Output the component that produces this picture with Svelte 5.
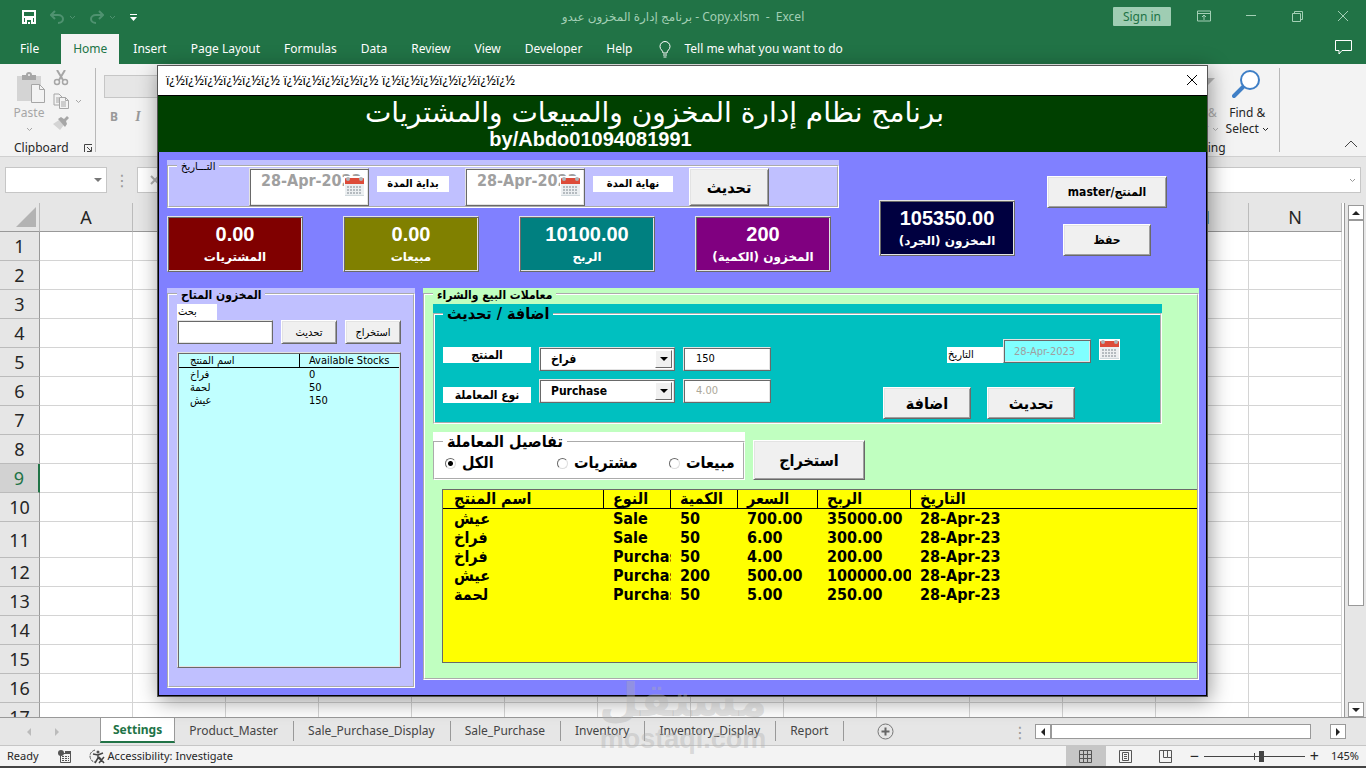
<script lang="ts">
  const menus = ['Insert', 'Page Layout', 'Formulas', 'Data', 'Review', 'View', 'Developer', 'Help'];
  const columns = 'ABCDEFGHIJKLMN'.split('');
  const rowNumbers = Array.from({ length: 17 }, (_, i) => i + 1);
  const sheets = [
    'Product_Master',
    'Sale_Purchase_Display',
    'Sale_Purchase',
    'Inventory',
    'Inventory_Display',
    'Report'
  ];

  const caption = [6, 5, 7].map((n) => 'ï¿½'.repeat(n)).join(' ');

  const totals = [
    { value: '0.00', label: 'المشتريات', tone: 'maroon' },
    { value: '0.00', label: 'مبيعات', tone: 'olive' },
    { value: '10100.00', label: 'الربح', tone: 'teal' },
    { value: '200', label: 'المخزون (الكمية)', tone: 'purple' }
  ];

  const stock = [
    { name: 'فراخ', qty: 0 },
    { name: 'لحمة', qty: 50 },
    { name: 'عيش', qty: 150 }
  ];

  const headings = ['اسم المنتج', 'النوع', 'الكمية', 'السعر', 'الربح', 'التاريخ'];
  const transactions = [
    ['عيش', 'Sale', '50', '700.00', '35000.00', '28-Apr-23'],
    ['فراخ', 'Sale', '50', '6.00', '300.00', '28-Apr-23'],
    ['فراخ', 'Purchase', '50', '4.00', '200.00', '28-Apr-23'],
    ['عيش', 'Purchase', '200', '500.00', '100000.00', '28-Apr-23'],
    ['لحمة', 'Purchase', '50', '5.00', '250.00', '28-Apr-23']
  ];

  const filters = [
    { id: 'all', label: 'الكل' },
    { id: 'purchases', label: 'مشتريات' },
    { id: 'sales', label: 'مبيعات' }
  ];

  let filter = $state('all');
  let product = $state('فراخ');
  let kind = $state('Purchase');
  let search = $state('');
</script>

{#snippet calendar()}
  <svg width="21" height="21" viewBox="0 0 21 21" aria-hidden="true">
    <rect width="21" height="21" fill="#fff" />
    <rect x="1" y="7" width="19" height="13" fill="#eceff1" />
    <rect x="1" y="19" width="19" height="1" fill="#cfd8dc" />
    <path d="M1 3a1 1 0 0 1 1-1h17a1 1 0 0 1 1 1v5H1z" fill="#dd4b39" />
    <circle cx="4" cy="3" r="2" fill="#b0b4b8" />
    <circle cx="17" cy="3" r="2" fill="#b0b4b8" />
    <path d="M3 11h15M3 14h15M3 17h15" stroke="#b5bbc0" stroke-width="2" stroke-dasharray="2 1" />
  </svg>
{/snippet}

{#snippet chevron()}
  <svg class="chevron" width="7" height="5" viewBox="0 0 7 5" aria-hidden="true">
    <path d="M1 1l2.500 2.500L6 1" fill="none" stroke="currentColor" />
  </svg>
{/snippet}

<div class="app">
  <header class="titlebar">
    <div class="quick">
      <button aria-label="Save">
        <svg width="14" height="14" viewBox="0 0 14 14">
          <path d="M1 1h12v12H1zM1 7h12" fill="none" stroke="#fff" stroke-width="2" />
          <path d="M3 8h8v6H3z" fill="#fff" />
          <path d="M5 10h4v4H8v-2H6v2H5z" fill="#217346" />
        </svg>
      </button>
      <button class="dim" aria-label="Undo">
        <svg width="14" height="14" viewBox="0 0 14 14">
          <path d="M5 1L1 5l4 4M1 5h7c3 0 5 2 5 4s-2 4-5 4" fill="none" stroke="currentColor" stroke-width="2" />
        </svg>
        {@render chevron()}
      </button>
      <button class="dim" aria-label="Redo">
        <svg width="14" height="14" viewBox="0 0 14 14">
          <path d="M9 1l4 4-4 4M13 5H6C3 5 1 7 1 9s2 4 5 4" fill="none" stroke="currentColor" stroke-width="2" />
        </svg>
        {@render chevron()}
      </button>
      <button aria-label="Customize">
        <svg width="7" height="7" viewBox="0 0 7 7">
          <path d="M0 0h7v1H0zM0 3h7L3.500 7z" fill="#fff" />
        </svg>
      </button>
    </div>
    <div class="doc">برنامج إدارة المخزون عبدو - Copy.xlsm&nbsp; -&nbsp; Excel</div>
    <div class="window-tools">
      <button class="signin">Sign in</button>
      <button aria-label="Ribbon options">
        <svg width="14" height="12" viewBox="0 0 14 12">
          <path d="M.5 1h13v10H.5zM.5 3.500h13M7 10V5M5 7l2-2 2 2" fill="none" stroke="currentColor" />
        </svg>
      </button>
      <button aria-label="Minimize">
        <svg width="12" height="12" viewBox="0 0 12 12"><path d="M1 5.500h10" stroke="currentColor" /></svg>
      </button>
      <button aria-label="Restore">
        <svg width="12" height="12" viewBox="0 0 12 12">
          <path d="M1.500 3.500h8v8h-8zM3.500 3V1.500h8v8H10" fill="none" stroke="currentColor" />
        </svg>
      </button>
      <button aria-label="Close">
        <svg width="12" height="12" viewBox="0 0 12 12"><path d="M1 1l10 10M11 1L1 11" stroke="currentColor" /></svg>
      </button>
    </div>
  </header>

  <nav class="menu">
    <button class="file">File</button>
    <button class="active">Home</button>
    {#each menus as item}
      <button>{item}</button>
    {/each}
    <button class="tell">
      <svg width="12" height="17" viewBox="0 0 12 17" aria-hidden="true">
        <path d="M4 12c0-3-3-3-3-6.500a5 5 0 0 1 10 0C11 9 8 9 8 12zM4 14h4M4.500 16h3" fill="none" stroke="#fff" />
      </svg>
      Tell me what you want to do
    </button>
    <button class="comment" aria-label="Comments">
      <svg width="17" height="15" viewBox="0 0 17 15">
        <path d="M.5.5h16v10H7l-3 3.500v-3.500H.5z" fill="none" stroke="#fff" />
      </svg>
    </button>
  </nav>

  <section class="ribbon">
    <div class="group clipboard">
      <div class="tools">
        <button class="paste">
          <svg width="30" height="31" viewBox="0 0 30 31" aria-hidden="true">
            <path d="M1 4h24v25H1z" fill="#d4d4d4" />
            <path d="M6 3h4a3 3 0 0 1 6 0h4v5H6z" fill="#a6a6a6" />
            <circle cx="13" cy="3" r="1" fill="#f3f3f3" />
            <path d="M15.500 12.500h8l5 5v13h-13z" fill="#f3f3f3" stroke="#a6a6a6" />
            <path d="M23.500 12.500v5h5" fill="none" stroke="#a6a6a6" />
          </svg>
          Paste
          {@render chevron()}
        </button>
        <div class="edit">
          <button aria-label="Cut">
            <svg width="16" height="16" viewBox="0 0 16 16">
              <path d="M4 0l6 10M12 0L6 10" stroke="#a6a6a6" stroke-width="2" />
              <circle cx="4" cy="12" r="2.500" fill="none" stroke="#a6a6a6" stroke-width="1.500" />
              <circle cx="12" cy="12" r="2.500" fill="none" stroke="#a6a6a6" stroke-width="1.500" />
            </svg>
          </button>
          <button aria-label="Copy">
            <svg width="16" height="16" viewBox="0 0 16 16">
              <path d="M1 1h5l3 3v8H1zM3 5h3M3 7h3M3 9h3" fill="none" stroke="#a6a6a6" />
              <path d="M6.500 4.500h6l3 3v8h-9zM12.500 4.500v3h3M8 9h5M8 11h5M8 13h5" fill="#f3f3f3" stroke="#a6a6a6" />
            </svg>
            {@render chevron()}
          </button>
          <button aria-label="Format painter">
            <svg width="16" height="14" viewBox="0 0 16 14">
              <path d="M0 8l6-4 5 5-4 5z" fill="#d4d4d4" />
              <path d="M5 3l3-2 3 2 3-3 2 2-3 3 1 3-2 3z" fill="#a6a6a6" />
            </svg>
          </button>
        </div>
      </div>
      <div class="group-name">
        <span>Clipboard</span>
        <svg width="8" height="8" viewBox="0 0 8 8" aria-hidden="true">
          <path d="M.5 8V.5H8M3 3l4 4M7.500 3v4.500H3" fill="none" stroke="#444" />
        </svg>
      </div>
    </div>
    <div class="group font">
      <input class="font-name" aria-label="Font" disabled />
      <div><button class="bold">B</button><button class="italic">I</button></div>
    </div>
    <div class="group editing">
      <div class="tools">
        <button class="sort">
          <svg width="32" height="30" viewBox="0 0 32 30" aria-hidden="true">
            <path d="M12 8h20l-8 8v8h-4v-8z" fill="#b9b9b9" />
          </svg>
          Sort &amp;<br />Filter {@render chevron()}
        </button>
        <button class="find">
          <svg width="30" height="30" viewBox="0 0 30 30" aria-hidden="true">
            <path d="M12 16L2 26" stroke="#3f7fc6" stroke-width="4" stroke-linecap="round" />
            <circle cx="18" cy="10" r="9" fill="#fff" stroke="#3f7fc6" stroke-width="2" />
          </svg>
          Find &amp;<br />Select {@render chevron()}
        </button>
      </div>
      <div class="group-name">Editing</div>
    </div>
    <button class="collapse" aria-label="Collapse ribbon">
      <svg width="14" height="8" viewBox="0 0 14 8"><path d="M1 7l6-6 6 6" fill="none" stroke="#444" /></svg>
    </button>
  </section>

  <section class="formula">
    <div class="name-box"><input aria-label="Name box" /><i class="down"></i></div>
    <span class="grip">⋮</span>
    <div class="formula-box">
      <svg width="10" height="12" viewBox="0 0 10 12" aria-hidden="true">
        <path d="M1 2l8 8M9 2l-8 8" stroke="#b0b0b0" stroke-width="2" />
      </svg>
      <input aria-label="Formula bar" />
      {@render chevron()}
    </div>
  </section>

  <main class="workbook">
    <div class="sheet">
      <table>
        <thead>
          <tr>
            <th class="corner"><i></i></th>
            {#each columns as column}
              <th>{column}</th>
            {/each}
          </tr>
        </thead>
        <tbody>
          {#each rowNumbers as n}
            <tr class:tall={n === 11} class:selected={n === 9}>
              <th>{n}</th>
              {#each columns as column (column)}
                <td></td>
              {/each}
            </tr>
          {/each}
        </tbody>
      </table>
    </div>
    <div class="vscroll">
      <button aria-label="Scroll up"><i class="up"></i></button>
      <div class="thumb"></div>
      <button class="last" aria-label="Scroll down"><i class="down"></i></button>
    </div>
  </main>

  <nav class="sheets">
    <div class="arrows"><i class="left"></i><i class="right"></i></div>
    <button class="current">Settings</button>
    {#each sheets as sheet}
      <button>{sheet}</button>
    {/each}
    <svg class="add" width="17" height="17" viewBox="0 0 17 17" aria-hidden="true">
      <circle cx="8.500" cy="8.500" r="7.500" fill="none" stroke="#777" />
      <path d="M8.500 4.500v8M4.500 8.500h8" stroke="#666" stroke-width="2" />
    </svg>
    <span class="grip">⋮</span>
    <div class="hscroll">
      <button aria-label="Scroll left"><i class="left"></i></button>
      <div class="thumb"></div>
      <button class="last" aria-label="Scroll right"><i class="right"></i></button>
    </div>
  </nav>

  <footer class="status">
    <span>Ready</span>
    <svg class="macro" width="14" height="13" viewBox="0 0 14 13" aria-hidden="true">
      <path d="M2.500 3.500h10v9h-10z" fill="none" stroke="#555" />
      <path d="M4 6.500h7M4 8.500h7M4 10.500h7" stroke="#555" stroke-dasharray="2 1" />
      <path d="M7 1h6v3H7z" fill="#555" />
      <circle cx="3" cy="3" r="3" fill="#555" />
    </svg>
    <svg class="access" width="16" height="15" viewBox="0 0 16 15" aria-hidden="true">
      <path d="M6 1C3 2 1 4 1 7s2 6 5 6" fill="none" stroke="#555" stroke-dasharray="3 1" />
      <circle cx="9" cy="3" r="1.500" fill="#555" />
      <path d="M4 5l5 1 5-2M9 6v3l-3 5M9 9l3 2M10 8l5 6M15 8l-5 6" fill="none" stroke="#444" stroke-width="1.500" />
    </svg>
    <span>Accessibility: Investigate</span>
    <div class="views">
      <button class="on" aria-label="Normal">
        <svg width="13" height="13" viewBox="0 0 13 13"><path d="M.5.5h12v12H.5zM4.500 0v13M8.500 0v13M0 4.500h13M0 8.500h13" fill="none" stroke="#555" /></svg>
      </button>
      <button aria-label="Page layout">
        <svg width="13" height="13" viewBox="0 0 13 13"><path d="M.5.5h12v12H.5zM3.500 2.500h6v8h-6zM5 4.500h3M5 6.500h3M5 8.500h3" fill="none" stroke="#555" /></svg>
      </button>
      <button aria-label="Page break preview">
        <svg width="13" height="13" viewBox="0 0 13 13"><path d="M.5.5h12v12H.5zM4.500 0v7.500h4V0M8.500 7.500h4" fill="none" stroke="#555" /></svg>
      </button>
    </div>
    <div class="zoom">
      <button aria-label="Zoom out">−</button>
      <svg width="101" height="11" viewBox="0 0 101 11" aria-hidden="true">
        <path d="M0 5.500h101M50.500 2v7" stroke="#444" />
        <path d="M55 0h5v11h-5z" fill="#444" />
      </svg>
      <button aria-label="Zoom in">+</button>
      <span>145%</span>
    </div>
  </footer>

  <div class="form" role="dialog" aria-label="برنامج نظام إدارة المخزون">
    <div class="form-bar">
      <span>{caption}</span>
      <button aria-label="Close form">
        <svg width="12" height="12" viewBox="0 0 12 12"><path d="M1 1l10 10M11 1L1 11" stroke="#000" /></svg>
      </button>
    </div>
    <div class="banner">
      <h1>برنامج نظام إدارة المخزون والمبيعات والمشتريات</h1>
      <p>by/Abdo01094081991</p>
    </div>

    <div class="body">
      <div class="top">
        <div class="summary">
          <div class="frame period">
            <fieldset>
              <legend>التـــاريخ</legend>
              <div class="period-row">
                <div class="date bevel">
                  <input id="start" value="28-Apr-2023" disabled />
                  <span class="cal">{@render calendar()}</span>
                </div>
                <label class="tag start" for="start">بداية المدة</label>
                <div class="date bevel">
                  <input id="end" value="28-Apr-2023" disabled />
                  <span class="cal">{@render calendar()}</span>
                </div>
                <label class="tag end" for="end">نهاية المدة</label>
                <button class="push medium">تحديث</button>
              </div>
            </fieldset>
          </div>
          <div class="tiles">
            {#each totals as total}
              <div class="tile bevel {total.tone}">
                <strong>{total.value}</strong>
                <span dir="rtl">{total.label}</span>
              </div>
            {/each}
          </div>
        </div>
        <div class="tile bevel navy">
          <strong>105350.00</strong>
          <span dir="rtl">المخزون (الجرد)</span>
        </div>
        <div class="actions">
          <button class="push master">master/المنتج</button>
          <button class="push save">حفظ</button>
        </div>
      </div>

      <div class="bottom">
        <div class="frame stock">
          <fieldset>
            <legend>المخزون المتاح</legend>
            <label class="search-label" for="search">بحث</label>
            <div class="search">
              <input id="search" class="bevel" bind:value={search} />
              <button class="push">تحديث</button>
              <button class="push">استخراج</button>
            </div>
            <div class="list bevel">
              <table>
                <thead>
                  <tr><th>اسم المنتج</th><th>Available Stocks</th></tr>
                </thead>
                <tbody>
                  {#each stock as item}
                    <tr><td>{item.name}</td><td>{item.qty}</td></tr>
                  {/each}
                </tbody>
              </table>
            </div>
          </fieldset>
        </div>

        <div class="frame deals">
          <fieldset>
            <legend>معاملات البيع والشراء</legend>
            <div class="frame entry">
              <fieldset>
                <legend>اضافة / تحديث</legend>
                <div class="entry-row">
                  <div class="fields">
                    <label class="tag" for="product">المنتج</label>
                    <div class="combo bevel">
                      <select id="product" bind:value={product}>
                        <option>فراخ</option>
                        <option>لحمة</option>
                        <option>عيش</option>
                      </select>
                      <span class="drop"><i class="down"></i></span>
                    </div>
                    <input class="bevel" aria-label="الكمية" value="150" />
                    <label class="tag low" for="kind">نوع المعاملة</label>
                    <div class="combo bevel">
                      <select id="kind" bind:value={kind}>
                        <option>Purchase</option>
                        <option>Sale</option>
                      </select>
                      <span class="drop"><i class="down"></i></span>
                    </div>
                    <input class="bevel muted" aria-label="السعر" value="4.00" disabled />
                  </div>
                  <div class="when">
                    <div class="when-date">
                      <label for="date">التاريخ</label>
                      <input id="date" class="bevel" value="28-Apr-2023" disabled />
                      {@render calendar()}
                    </div>
                    <div class="when-buttons">
                      <button class="push medium">اضافة</button>
                      <button class="push medium">تحديث</button>
                    </div>
                  </div>
                </div>
              </fieldset>
            </div>

            <div class="filter-row">
              <div class="frame details">
                <fieldset>
                  <legend>تفاصيل المعاملة</legend>
                  <div class="radios">
                    {#each filters as f}
                      <label><input type="radio" value={f.id} bind:group={filter} />{f.label}</label>
                    {/each}
                  </div>
                </fieldset>
              </div>
              <button class="push medium export">استخراج</button>
            </div>

            <div class="deals-list">
              <table>
                <thead>
                  <tr>
                    {#each headings as heading}
                      <th>{heading}</th>
                    {/each}
                  </tr>
                </thead>
                <tbody>
                  {#each transactions as row}
                    <tr>
                      {#each row as cell}
                        <td>{cell}</td>
                      {/each}
                    </tr>
                  {/each}
                </tbody>
              </table>
            </div>
          </fieldset>
        </div>
      </div>
    </div>
  </div>

  <div class="watermark" aria-hidden="true">
    <b>مستقل</b>
    <span>mostaql.com</span>
  </div>
</div>

<style>
  :global(body) {
    margin: 0;
    overflow: hidden;
  }

  .app {
    position: relative;
    height: 100vh;
    min-width: 1200px;
    display: flex;
    flex-direction: column;
    font: 12px/16px 'Noto Sans', 'DejaVu Sans', sans-serif;
    color: #262626;
    background: #e6e6e6;
  }

  .app * {
    box-sizing: border-box;
  }

  button,
  input,
  select {
    font: inherit;
    color: inherit;
    margin: 0;
    padding: 0;
    border: 0;
    background: none;
    border-radius: 0;
    white-space: nowrap;
  }

  svg {
    flex: none;
  }

  /* small triangles */
  i.up,
  i.down,
  i.left,
  i.right {
    width: 0;
    height: 0;
    border: 4px solid transparent;
  }

  i.up {
    border-top: 0;
    border-bottom-color: #222;
  }

  i.down {
    border-bottom: 0;
    border-top-color: #222;
  }

  i.left {
    border-left: 0;
    border-right-color: #222;
  }

  i.right {
    border-right: 0;
    border-left-color: #222;
  }

  /* excel chrome */
  .titlebar {
    height: 34px;
    flex: none;
    display: grid;
    grid-template-columns: 1fr auto 1fr;
    align-items: center;
    background: #217346;
    color: #a3cfb5;
  }

  .quick {
    display: flex;
    align-items: center;
    gap: 14px;
    padding-left: 22px;
  }

  .quick button {
    display: flex;
    align-items: center;
    gap: 5px;
  }

  .quick .dim {
    color: #4f9270;
  }

  .window-tools {
    display: flex;
    align-items: center;
    justify-content: flex-end;
    gap: 34px;
    padding-right: 17px;
    padding-bottom: 2px;
  }

  .window-tools button {
    display: flex;
  }

  .window-tools .signin {
    padding: 2px 10px 1px;
    margin-right: -8px;
    background: #9fcdb3;
    color: #217346;
    border-radius: 1px;
  }

  .menu {
    height: 30px;
    flex: none;
    display: flex;
    background: #217346;
    color: #fff;
  }

  .menu button {
    padding: 0 12px;
  }

  .menu .file {
    padding: 0 22px 0 20px;
  }

  .menu .active {
    padding: 0 12px;
    margin-right: 2px;
    background: #f3f3f3;
    color: #217346;
  }

  .menu .tell {
    display: flex;
    align-items: center;
    gap: 13px;
    padding-left: 15px;
  }

  .menu .comment {
    margin-left: auto;
    padding: 0 14px;
  }

  .ribbon {
    height: 93px;
    flex: none;
    display: flex;
    padding: 4px 0 0;
    background: #f3f3f3;
    border-bottom: 1px solid #d0d0d0;
  }

  .group {
    height: 84px;
    display: flex;
    flex-direction: column;
  }

  .tools {
    height: 72px;
    flex: none;
    display: flex;
    align-items: flex-start;
  }

  .clipboard {
    width: 96px;
    padding-left: 14px;
    border-right: 1px solid #b8b8b8;
  }

  .paste {
    width: 30px;
    display: flex;
    flex-direction: column;
    align-items: center;
    color: #a6a6a6;
  }

  .paste svg:first-child {
    margin: 4px 0 2px 3px;
  }

  .paste .chevron {
    margin-top: 6px;
  }

  .edit {
    display: flex;
    flex-direction: column;
    gap: 7px;
    padding: 2px 0 0 9px;
    color: #a6a6a6;
  }

  .edit button {
    display: flex;
    align-items: center;
    gap: 6px;
  }

  .group-name {
    display: flex;
    align-items: center;
    gap: 15px;
  }

  .font {
    padding: 7px 8px;
    justify-content: flex-start;
    gap: 11px;
    color: #999;
  }

  .font-name {
    width: 120px;
    height: 23px;
    border: 1px solid #c6c6c6;
    background: #e6e6e6;
  }

  .bold {
    width: 20px;
    font-weight: bold;
  }

  .italic {
    width: 28px;
    font-family: 'Liberation Serif', serif;
    font-style: italic;
    font-size: 14px;
    font-weight: bold;
  }

  .editing {
    margin-left: auto;
    padding-right: 10px;
    border-right: 1px solid #b8b8b8;
  }

  .editing .tools {
    gap: 7px;
  }

  .editing .tools button {
    padding-top: 2px;
  }

  .editing svg:first-child {
    display: block;
    margin: 0 auto 5px;
  }

  .editing .chevron {
    vertical-align: middle;
  }

  .editing .group-name {
    justify-content: center;
    padding-right: 37px;
  }

  .sort {
    color: #b0b0b0;
  }

  .collapse {
    width: 86px;
    padding: 0 8px 4px;
    text-align: right;
    align-self: flex-end;
  }

  .formula {
    height: 46px;
    flex: none;
    display: flex;
    align-items: center;
    padding: 0 5px 0 5px;
  }

  .name-box,
  .formula-box {
    height: 26px;
    display: flex;
    align-items: center;
    background: #fff;
    border: 1px solid #c6c6c6;
  }

  .name-box {
    width: 102px;
    padding-right: 5px;
  }

  .name-box input {
    width: 88px;
  }

  .name-box i {
    border-top-color: #777;
  }

  .grip {
    width: 30px;
    text-align: center;
    color: #999;
    font-size: 16px;
  }

  .formula-box {
    flex: 1;
    padding: 0 4px 0 12px;
    color: #999;
  }

  .formula-box input {
    flex: 1;
  }

  .workbook {
    flex: 1;
    min-height: 0;
    display: flex;
    border-bottom: 1px solid #999;
  }

  .sheet {
    flex: 1;
    overflow: hidden;
    background: #fff;
    border-right: 1px solid #999;
  }

  .sheet table {
    width: 1342px;
    table-layout: fixed;
    border-collapse: separate;
    border-spacing: 0;
    font-size: 18px;
    line-height: 20px;
  }

  .sheet th {
    padding: 0;
    font-weight: normal;
    background: #e6e6e6;
    border-right: 1px solid #bbb;
    border-bottom: 1px solid #bbb;
  }

  .sheet thead th {
    height: 29px;
    border-bottom-color: #999;
  }

  .sheet .corner {
    width: 40px;
    padding-left: 16px;
  }

  .corner i {
    display: block;
    border: 10px solid #b3b3b3;
    border-top-color: transparent;
    border-left-color: transparent;
    width: 0;
    height: 0;
  }

  .sheet td {
    height: 29px;
    padding: 0;
    border-right: 1px solid #d4d4d4;
    border-bottom: 1px solid #d4d4d4;
  }

  .sheet .tall td {
    height: 36px;
  }

  .sheet tbody th {
    border-right-color: #999;
  }

  .sheet .selected th {
    background: #d2d2d2;
    color: #217346;
    border-right: 2px solid #217346;
  }

  .vscroll {
    width: 21px;
    display: flex;
    flex-direction: column;
    padding: 2px 2px 0 3px;
  }

  .vscroll button,
  .hscroll button {
    width: 16px;
    height: 15px;
    display: flex;
    align-items: center;
    justify-content: center;
    background: #fff;
    border: 1px solid #999;
  }

  .vscroll .last {
    margin-top: auto;
  }

  .vscroll .thumb {
    height: 386px;
    background: #fff;
    border: 1px solid #999;
  }

  .sheets {
    height: 28px;
    flex: none;
    display: flex;
    border-bottom: 1px solid #c6c6c6;
    color: #444;
  }

  .sheets > button {
    height: 20px;
    margin-top: 3px;
    padding: 0 15px 0 14px;
    border-right: 1px solid #999;
  }

  .sheets > .current {
    height: 25px;
    margin-top: 0;
    padding: 0 12px;
    background: #fff;
    color: #217346;
    font-weight: bold;
    border-left: 1px solid #999;
    border-bottom: 2px solid #217346;
  }

  .arrows {
    width: 100px;
    display: flex;
    align-items: center;
    gap: 24px;
    padding-left: 27px;
  }

  .arrows .left {
    border-right-color: #bbb;
  }

  .arrows .right {
    border-left-color: #bbb;
  }

  .add {
    margin: 5px 0 0 33px;
  }

  .sheets .grip {
    margin-left: auto;
    padding-top: 6px;
  }

  .hscroll {
    width: 311px;
    display: flex;
    align-items: center;
    margin-right: 20px;
  }

  .hscroll .thumb {
    width: 260px;
    height: 15px;
    background: #fff;
    border: 1px solid #999;
  }

  .hscroll .last {
    margin-left: auto;
  }

  .status {
    height: 22px;
    flex: none;
    display: flex;
    align-items: center;
    padding-left: 7px;
    background: #f3f3f3;
    border-bottom: 2px solid #444;
    font-size: 11px;
  }

  .macro {
    margin: 0 17px 0 19px;
  }

  .access {
    margin-right: 3px;
  }

  .views {
    display: flex;
    align-self: stretch;
    margin-left: auto;
  }

  .views button {
    width: 40px;
    display: flex;
    align-items: center;
    justify-content: center;
  }

  .views .on {
    background: #c6c6c6;
  }

  .zoom {
    display: flex;
    align-items: center;
    gap: 5px;
    padding: 0 7px 0 4px;
  }

  .zoom button {
    font-size: 16px;
  }

  .zoom span {
    padding-left: 7px;
  }

  /* user form window */
  .form {
    position: absolute;
    top: 65px;
    left: 157px;
    right: 158px;
    border: 1px solid #555;
    background: #8080ff;
    box-shadow: 2px 4px 20px rgba(0, 0, 0, 0.4);
    font: 11px/13px 'DejaVu Sans Condensed', 'DejaVu Sans', sans-serif;
    color: #000;
  }

  .form-bar {
    height: 30px;
    display: flex;
    align-items: center;
    justify-content: space-between;
    padding: 0 9px 2px 8px;
    background: #fff;
    border-bottom: 1px solid #000;
    font: 13px/16px 'Noto Sans', sans-serif;
  }

  .form-bar button {
    display: flex;
  }

  .banner {
    height: 56px;
    background: #004000;
    color: #fff;
    text-align: center;
  }

  h1 {
    margin: 0;
    padding-right: 56px;
    font: 28px/34px 'DejaVu Sans', sans-serif;
  }

  .banner p {
    margin: 0;
    padding-right: 184px;
    font: bold 20px/18px 'Liberation Sans', sans-serif;
  }

  .body {
    padding: 8px 7px 7px 8px;
    border: solid #000;
    border-width: 0 1px 1px;
  }

  .bevel {
    border: 1px solid;
    border-color: #e3e3e3 #696969 #696969 #e3e3e3;
    box-shadow: inset 1px 1px #696969, inset -1px -1px #e3e3e3;
  }

  .push {
    background: #f0f0f0;
    border: 1px solid;
    border-color: #fff #696969 #696969 #fff;
    box-shadow: inset 1px 1px #e3e3e3, inset -1px -1px #a0a0a0;
  }

  .medium {
    font-size: 16px;
    font-weight: bold;
  }

  fieldset {
    min-width: 0;
    height: 100%;
    margin: 0;
    padding: 0;
    border: 2px groove #fff;
  }

  legend {
    height: 12px;
    margin-left: 8px;
    padding: 0 4px;
    line-height: 14px;
  }

  .top {
    display: flex;
  }

  .summary {
    width: 672px;
  }

  .period {
    height: 48px;
    background: #c0c0ff;
  }

  .period-row {
    display: flex;
    align-items: flex-start;
    padding-left: 80px;
    margin-top: -4px;
  }

  .date {
    position: relative;
    width: 120px;
    height: 38px;
    padding: 2px;
    background: #fff;
  }

  .date input {
    width: 100%;
    padding: 0 0 0 9px;
    font-size: 16px;
    line-height: 20px;
    font-weight: bold;
    color: #a0a0a0;
  }

  .cal {
    position: absolute;
    top: 7px;
    right: 3px;
  }

  .tag {
    height: 16px;
    background: #fff;
    text-align: center;
    font-weight: bold;
    line-height: 16px;
  }

  .period .tag {
    width: 72px;
    margin: 8px 16px 0 8px;
  }

  .period .end {
    width: 80px;
  }

  .period .push {
    width: 80px;
    height: 38px;
  }

  .tiles {
    display: flex;
    gap: 40px;
    padding-top: 8px;
  }

  .tile {
    width: 136px;
    height: 56px;
    flex: none;
    display: flex;
    flex-direction: column;
    align-items: center;
    gap: 5px;
    padding-top: 6px;
    color: #fff;
    font: bold 12px/14px 'DejaVu Sans', sans-serif;
  }

  .tile strong {
    font: bold 20px/22px 'Liberation Sans', sans-serif;
  }

  .maroon {
    background: #800000;
  }

  .olive {
    background: #808000;
  }

  .teal {
    background: #008080;
  }

  .purple {
    background: #800080;
  }

  .navy {
    background: #000040;
    margin: 40px 32px 0 40px;
  }

  .actions {
    display: flex;
    flex-direction: column;
    align-items: center;
    gap: 16px;
    padding-top: 16px;
  }

  .actions .push {
    height: 32px;
    font-size: 12px;
    font-weight: bold;
  }

  .master {
    width: 120px;
  }

  .save {
    width: 88px;
  }

  .bottom {
    display: flex;
    align-items: flex-start;
    gap: 8px;
    padding-top: 16px;
  }

  .stock {
    width: 248px;
    height: 400px;
    background: #c0c0ff;
  }

  .stock fieldset,
  .deals > fieldset {
    padding: 0 8px;
  }

  .stock legend,
  .deals legend {
    margin-left: 0;
    font-size: 12px;
    font-weight: bold;
  }

  .search-label {
    display: block;
    width: 40px;
    height: 16px;
    padding: 1px;
    margin-top: 4px;
    background: #fff;
  }

  .search {
    display: flex;
    gap: 8px;
    padding-bottom: 8px;
  }

  .search input {
    width: 96px;
    height: 24px;
    padding: 0 4px;
    background: #fff;
  }

  .search .push {
    width: 56px;
    height: 24px;
  }

  .list {
    width: 224px;
    height: 316px;
    padding: 1px;
    background: #c0ffff;
  }

  .list table {
    width: 100%;
    border-spacing: 0;
    table-layout: fixed;
  }

  .list th,
  .list td {
    height: 13px;
    padding: 0 9px;
    text-align: left;
    font-weight: normal;
  }

  .list th {
    border-bottom: 1px solid #000;
    white-space: nowrap;
  }

  .list th:first-child {
    width: 121px;
    border-right: 1px solid #000;
  }

  .list th:first-child,
  .list td:first-child {
    padding-left: 11px;
  }

  .deals {
    flex: 1;
    min-width: 0;
    height: 392px;
    background: #c0ffc0;
  }

  .entry {
    width: 729px;
    height: 120px;
    margin-top: 4px;
    background: #00c0c0;
  }

  .deals .frame legend {
    height: 20px;
    font-size: 16px;
    line-height: 20px;
  }

  .entry fieldset,
  .details fieldset {
    padding: 0 8px;
  }

  .entry-row {
    display: flex;
    justify-content: space-between;
    padding: 15px 32px 0 0;
  }

  .fields {
    display: grid;
    grid-template-columns: 88px 136px 88px;
    grid-auto-rows: 24px;
    gap: 8px;
    padding-top: 8px;
  }

  .fields .tag {
    font-size: 12px;
  }

  .low {
    align-self: end;
  }

  .fields input {
    padding: 0 12px 2px;
    background: #fff;
    min-width: 0;
  }

  .fields .muted {
    color: #aca899;
  }

  .combo {
    display: flex;
    padding: 2px;
    background: #fff;
  }

  .combo select {
    flex: 1;
    min-width: 0;
    appearance: none;
    padding-left: 9px;
    font-size: 12px;
    font-weight: bold;
  }

  .drop {
    width: 17px;
    display: flex;
    align-items: center;
    justify-content: center;
    background: #f0f0f0;
    border: 1px solid;
    border-color: #fff #696969 #696969 #fff;
  }

  .drop i {
    border-top-color: #000;
  }

  .when-date {
    display: flex;
    align-items: flex-start;
    padding-left: 64px;
  }

  .when-date label {
    width: 56px;
    height: 16px;
    margin-top: 8px;
    padding-left: 1px;
    background: #fff;
    line-height: 16px;
  }

  .when-date input {
    width: 88px;
    height: 24px;
    margin-right: 8px;
    padding: 0 10px;
    background: #80ffff;
    color: #a0a0a0;
  }

  .when-buttons {
    display: flex;
    gap: 16px;
    padding-top: 24px;
  }

  .when-buttons .push {
    width: 88px;
    height: 32px;
  }

  .filter-row {
    display: flex;
    align-items: flex-end;
    gap: 8px;
    padding: 8px 0 9px;
  }

  .details {
    width: 312px;
    height: 48px;
    background: #fff;
  }

  .radios {
    display: grid;
    grid-template-columns: 112px 112px auto;
    padding-left: 2px;
  }

  .radios label {
    display: flex;
    align-items: center;
    gap: 6px;
    font-size: 16px;
    line-height: 22px;
    font-weight: bold;
    white-space: nowrap;
  }

  .radios input {
    appearance: none;
    width: 11px;
    height: 11px;
    border: 1px solid;
    border-color: #696969 #ddd #ddd #696969;
    border-radius: 50%;
    background: #fff;
  }

  .radios input:checked {
    background: radial-gradient(circle, #000 2px, #fff 3px);
  }

  .export {
    width: 112px;
    height: 40px;
  }

  .deals-list {
    height: 174px;
    margin: 0 -8px 0 9px;
    border: 1px solid #696969;
    border-right: 0;
    background: #ff0;
    overflow: hidden;
  }

  .deals-list table {
    width: 100%;
    border-spacing: 0;
    table-layout: fixed;
    font-size: 16px;
    line-height: 19px;
    font-weight: bold;
  }

  .deals-list th,
  .deals-list td {
    height: 19px;
    padding: 0 0 0 9px;
    text-align: left;
    white-space: nowrap;
    overflow: hidden;
  }

  .deals-list th {
    line-height: 18px;
    border-right: 1px solid #000;
    border-bottom: 1px solid #000;
  }

  .deals-list th:first-child,
  .deals-list td:first-child {
    width: 161px;
    padding-left: 11px;
  }

  .deals-list th:nth-child(2),
  .deals-list th:nth-child(3) {
    width: 67px;
  }

  .deals-list th:nth-child(4) {
    width: 80px;
  }

  .deals-list th:nth-child(5) {
    width: 93px;
  }

  .deals-list th:last-child {
    border-right: 0;
  }

  .watermark {
    position: absolute;
    bottom: 15px;
    left: 0;
    right: 0;
    display: flex;
    flex-direction: column;
    align-items: center;
    color: rgba(175, 175, 175, 0.4);
    font: bold 27px/28px 'Liberation Sans', sans-serif;
    pointer-events: none;
  }

  .watermark b {
    font: bold 46px/50px 'DejaVu Sans', sans-serif;
  }
</style>
